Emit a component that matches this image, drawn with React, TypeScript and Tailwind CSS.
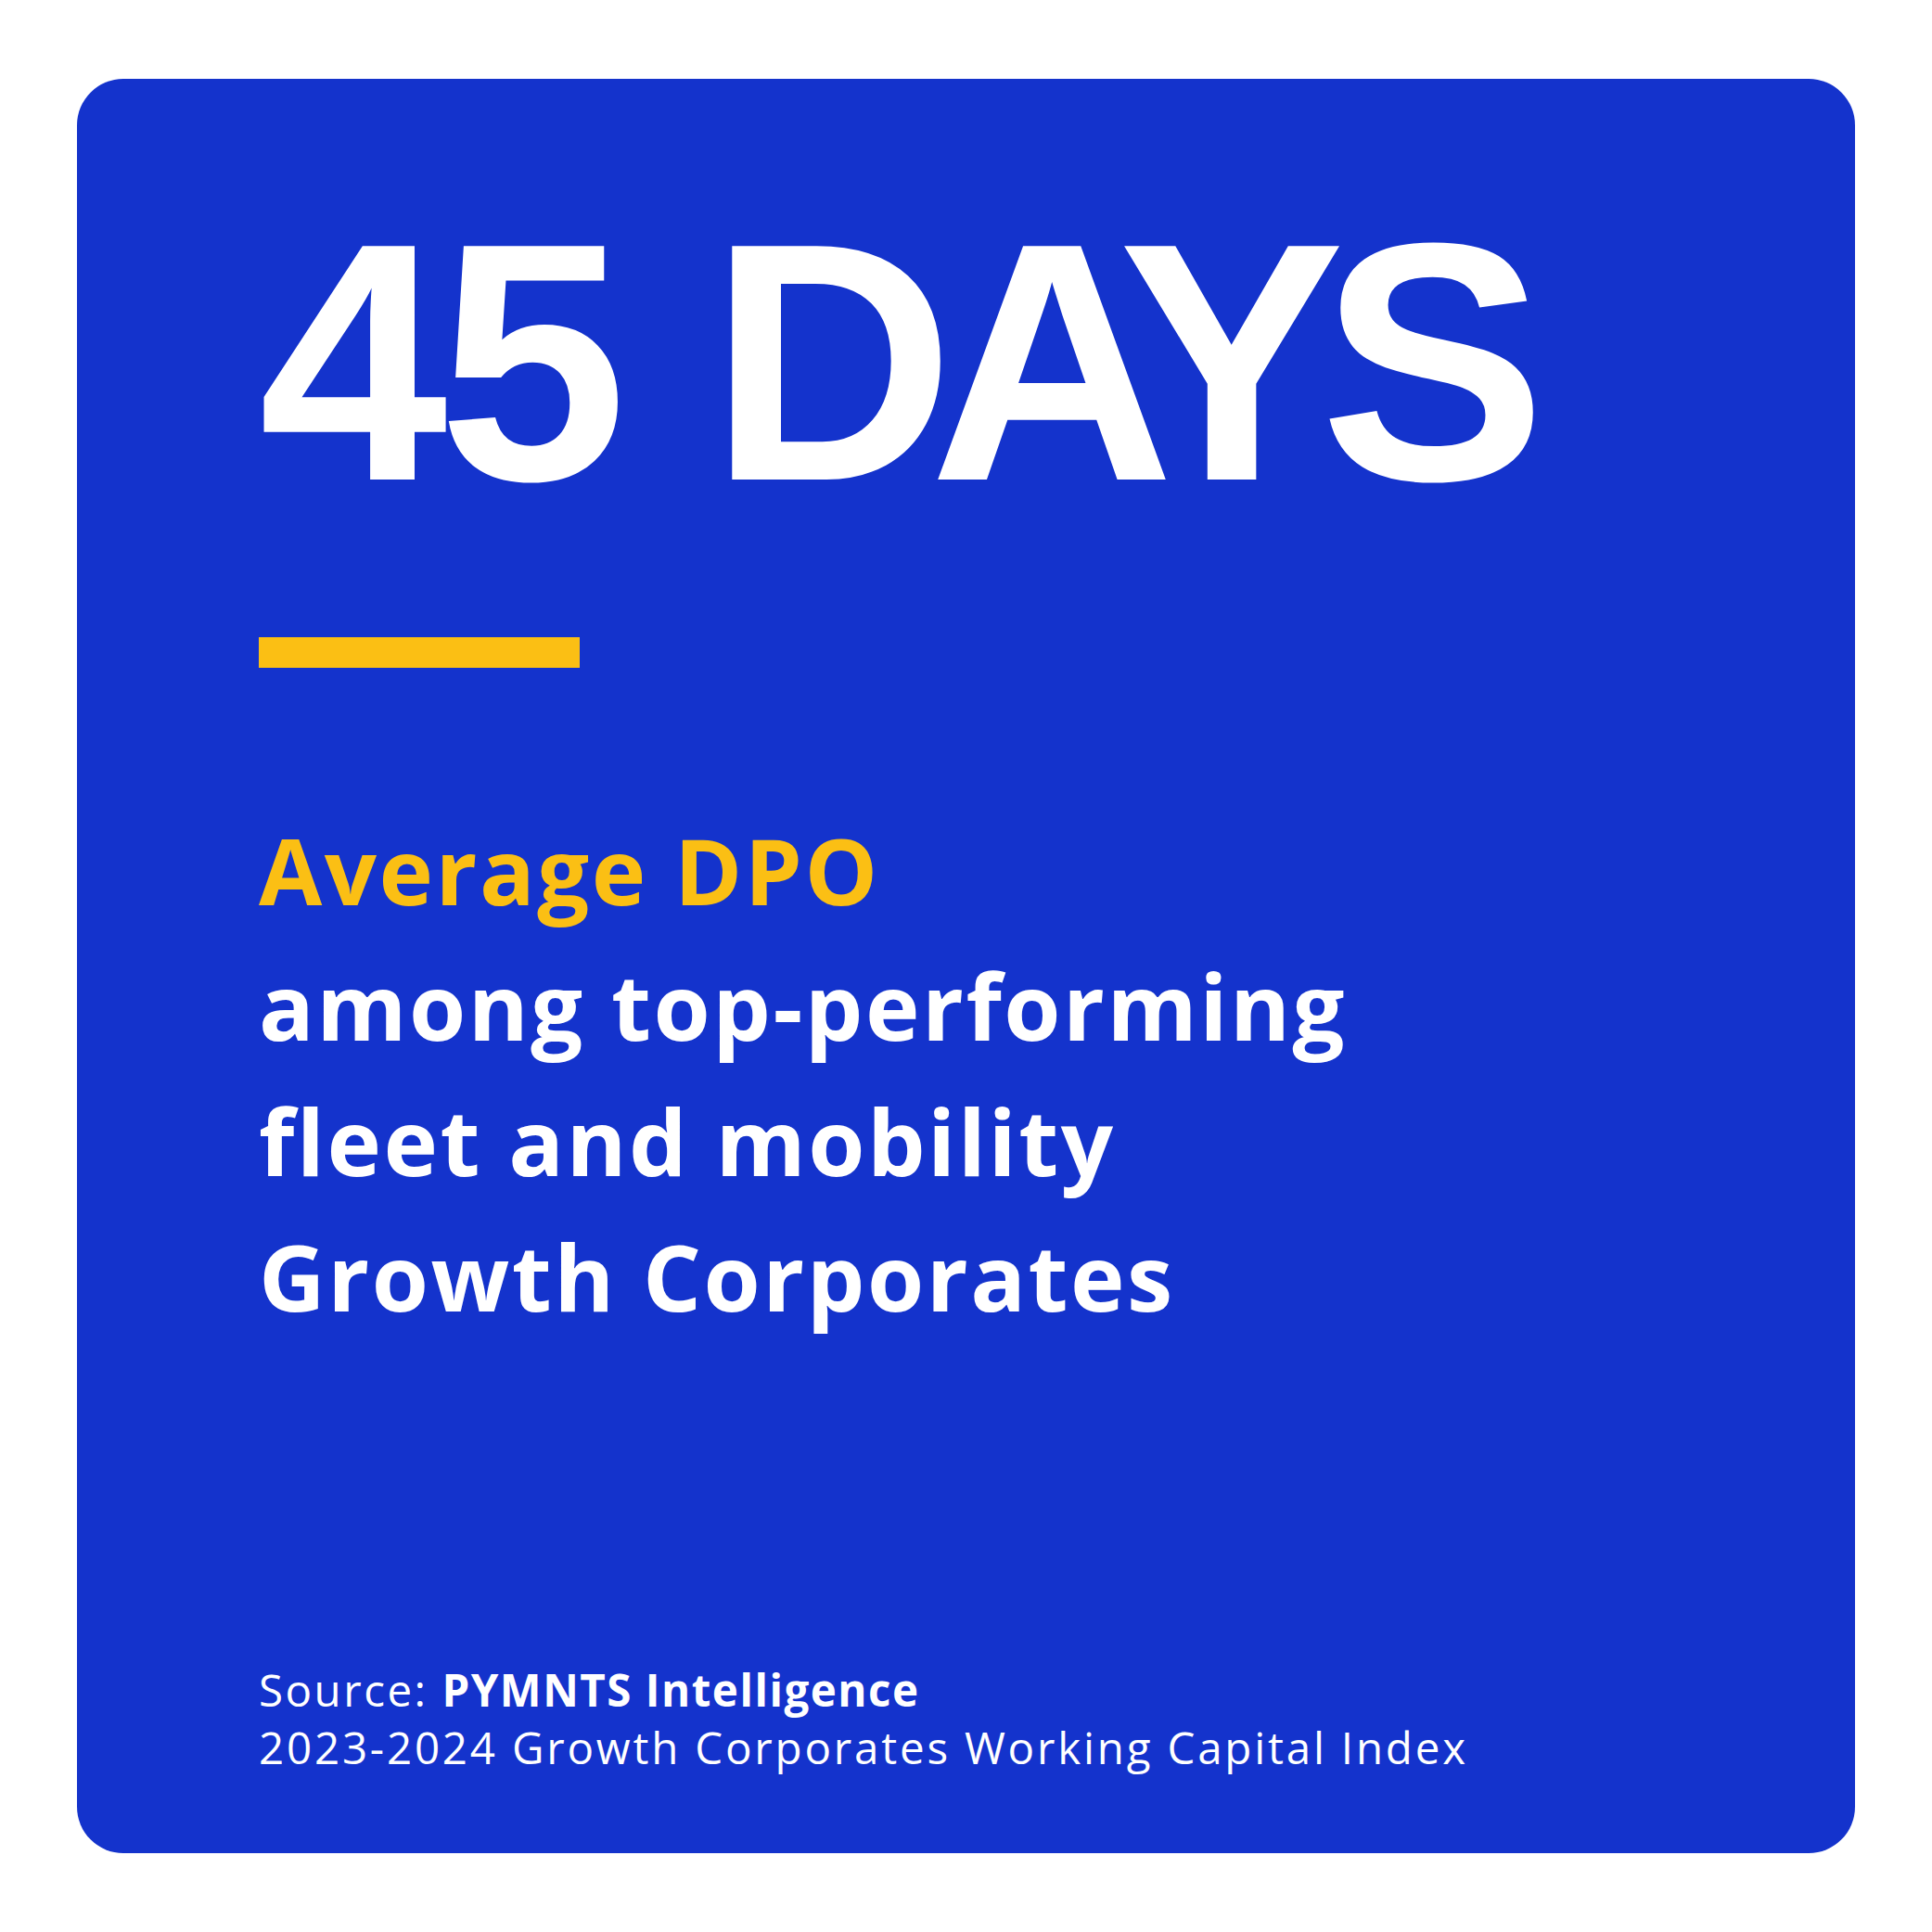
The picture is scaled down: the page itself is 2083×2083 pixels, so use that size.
export default function App() {
  return (
    <div className="w-[2083px] h-[2083px] bg-white pt-[85px] pl-[83px]">
      <div className="w-[1917px] h-[1913px] rounded-[50px] bg-[#1433cc] flex flex-col pt-[123px] pl-[196px] pb-[83px]">
        <h1 className="text-white font-bold text-[366px] leading-[366px] [font-family:'Liberation_Sans',Arial,sans-serif] whitespace-nowrap">
          <span className="tracking-[-10px]">45</span>
          <span className="tracking-[-27px] [word-spacing:24px]"> DAYS</span>
        </h1>
        <div className="mt-[113px] w-[346px] h-[33px] bg-[#fbbf14]" />
        <div className="mt-[145px] text-[99px] leading-[146px] font-bold tracking-[2.5px] [font-family:'Open_Sans',sans-serif]">
          <div className="text-[#fbbf14]">Average DPO</div>
          <div className="text-white">among top-performing</div>
          <div className="text-white">fleet and mobility</div>
          <div className="text-white">Growth Corporates</div>
        </div>
        <div className="mt-auto text-white text-[47.5px] leading-[62px] tracking-[2.5px] [font-family:'Open_Sans',sans-serif]">
          <div>
            Source: <span className="font-bold tracking-[1.5px]">PYMNTS Intelligence</span>
          </div>
          <div className="tracking-[2.8px]">2023-2024 Growth Corporates Working Capital Index</div>
        </div>
      </div>
    </div>
  );
}
